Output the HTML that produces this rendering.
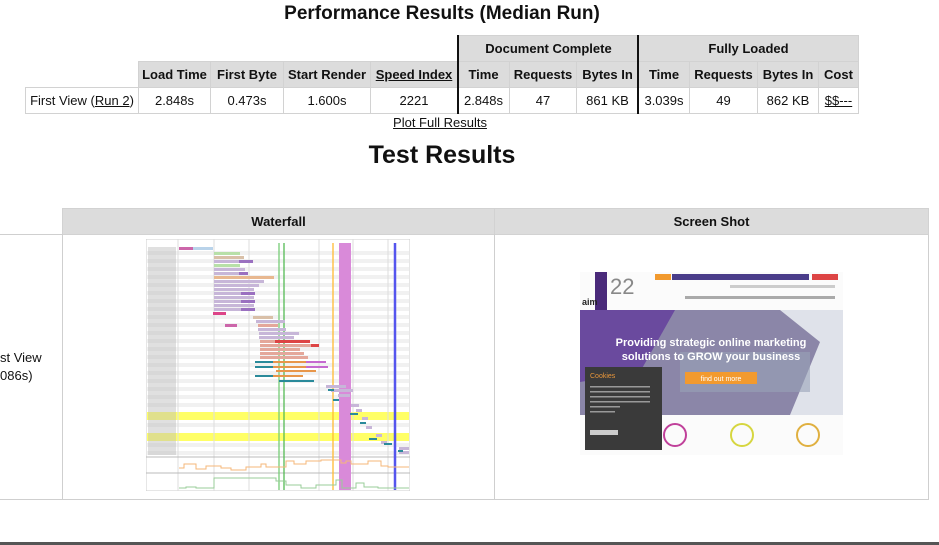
<!DOCTYPE html>
<html><head><meta charset="utf-8"><style>
*{margin:0;padding:0;box-sizing:border-box}
body{width:939px;height:545px;overflow:hidden;background:#fff;font-family:"Liberation Sans",Arial,sans-serif;color:#111;position:relative}
.a{position:absolute}
.c{position:absolute;display:flex;align-items:center;justify-content:center;font-size:13px;border:1px solid #d2d2d2}
.h{background:#dcdcdc;font-weight:bold}
.vb{position:absolute;width:2px;background:#111}
</style></head><body>
<div class="a" style="left:0;width:884px;top:3px;text-align:center;font-weight:bold;font-size:19px">Performance Results (Median Run)</div>

<div class="c h" style="left:458px;top:35px;width:181px;height:27px">Document Complete</div>
<div class="c h" style="left:638px;top:35px;width:221px;height:27px">Fully Loaded</div>

<div class="c h" style="left:138px;top:61px;width:73px;height:27px">Load Time</div>
<div class="c h" style="left:210px;top:61px;width:74px;height:27px">First Byte</div>
<div class="c h" style="left:283px;top:61px;width:88px;height:27px">Start Render</div>
<div class="c h" style="left:370px;top:61px;width:88px;height:27px"><u>Speed Index</u></div>
<div class="c h" style="left:457px;top:61px;width:53px;height:27px">Time</div>
<div class="c h" style="left:509px;top:61px;width:68px;height:27px">Requests</div>
<div class="c h" style="left:576px;top:61px;width:63px;height:27px">Bytes In</div>
<div class="c h" style="left:638px;top:61px;width:52px;height:27px">Time</div>
<div class="c h" style="left:689px;top:61px;width:69px;height:27px">Requests</div>
<div class="c h" style="left:757px;top:61px;width:62px;height:27px">Bytes In</div>
<div class="c h" style="left:818px;top:61px;width:41px;height:27px">Cost</div>

<div class="c" style="left:25px;top:87px;width:114px;height:27px">First View (<u>Run 2</u>)</div>
<div class="c" style="left:138px;top:87px;width:73px;height:27px">2.848s</div>
<div class="c" style="left:210px;top:87px;width:74px;height:27px">0.473s</div>
<div class="c" style="left:283px;top:87px;width:88px;height:27px">1.600s</div>
<div class="c" style="left:370px;top:87px;width:88px;height:27px">2221</div>
<div class="c" style="left:457px;top:87px;width:53px;height:27px">2.848s</div>
<div class="c" style="left:509px;top:87px;width:68px;height:27px">47</div>
<div class="c" style="left:576px;top:87px;width:63px;height:27px">861 KB</div>
<div class="c" style="left:638px;top:87px;width:52px;height:27px">3.039s</div>
<div class="c" style="left:689px;top:87px;width:69px;height:27px">49</div>
<div class="c" style="left:757px;top:87px;width:62px;height:27px">862 KB</div>
<div class="c" style="left:818px;top:87px;width:41px;height:27px"><u>$$---</u></div>
<div class="vb" style="left:457px;top:35px;height:79px"></div>
<div class="vb" style="left:637px;top:35px;height:79px"></div>

<div class="a" style="left:340px;width:200px;top:115px;text-align:center;font-size:13px"><u>Plot Full Results</u></div>
<div class="a" style="left:0;width:884px;top:141px;text-align:center;font-weight:bold;font-size:25px">Test Results</div>

<div class="a" style="left:-2px;top:234px;width:931px;height:266px;border:1px solid #cfcfcf"></div>
<div class="c h" style="left:62px;top:208px;width:433px;height:27px">Waterfall</div>
<div class="c h" style="left:494px;top:208px;width:435px;height:27px">Screen Shot</div>
<div class="a" style="left:62px;top:234px;width:1px;height:266px;background:#cfcfcf"></div>
<div class="a" style="left:494px;top:234px;width:1px;height:266px;background:#cfcfcf"></div>
<div class="a" style="left:0;top:349px;font-size:13px;line-height:18px">st View<br>086s)</div>

<svg class="a" style="left:146px;top:239px" width="264" height="252" viewBox="0 0 264 252">
<rect width="264" height="252" fill="#fff" stroke="#ccc"/>
<g fill="#f1f1f1">
<rect x="1" y="12" width="262" height="4"/><rect x="1" y="20" width="262" height="4"/><rect x="1" y="28" width="262" height="4"/><rect x="1" y="36" width="262" height="4"/><rect x="1" y="44" width="262" height="4"/><rect x="1" y="52" width="262" height="4"/><rect x="1" y="60" width="262" height="4"/><rect x="1" y="68" width="262" height="4"/><rect x="1" y="76" width="262" height="4"/><rect x="1" y="84" width="262" height="4"/><rect x="1" y="92" width="262" height="4"/><rect x="1" y="100" width="262" height="4"/><rect x="1" y="108" width="262" height="4"/><rect x="1" y="116" width="262" height="4"/><rect x="1" y="124" width="262" height="4"/><rect x="1" y="132" width="262" height="4"/><rect x="1" y="140" width="262" height="4"/><rect x="1" y="148" width="262" height="4"/><rect x="1" y="156" width="262" height="4"/><rect x="1" y="164" width="262" height="4"/><rect x="1" y="184" width="262" height="4"/><rect x="1" y="204" width="262" height="4"/><rect x="1" y="212" width="262" height="4"/>
</g>
<rect x="1" y="173" width="262" height="8" fill="#ffff66"/>
<rect x="1" y="194" width="262" height="8" fill="#ffff66"/>
<g fill="#bbb" opacity=".45"><rect x="2" y="8" width="28" height="208"/></g>
<g stroke="#ddd" stroke-width="1"><line x1="32" y1="0" x2="32" y2="252"/><line x1="68" y1="0" x2="68" y2="252"/><line x1="103" y1="0" x2="103" y2="252"/><line x1="173" y1="0" x2="173" y2="252"/><line x1="207" y1="0" x2="207" y2="252"/><line x1="242" y1="0" x2="242" y2="252"/><line x1="0" y1="218" x2="264" y2="218" stroke="#bbb"/><line x1="0" y1="234" x2="264" y2="234" stroke="#bbb"/></g>
<rect x="193" y="4" width="12" height="247" fill="#d98ad9"/>
<g stroke-width="1.3"><line x1="133" y1="4" x2="133" y2="251" stroke="#7c7"/><line x1="138" y1="4" x2="138" y2="251" stroke="#5b5"/><line x1="187" y1="4" x2="187" y2="251" stroke="#fb3"/><line x1="249" y1="4" x2="249" y2="251" stroke="#55e" stroke-width="2.5"/></g>
<g>
<rect x="33" y="8" width="34" height="3" fill="#b9d3ea"/><rect x="33" y="8" width="14" height="3" fill="#c6a"/>
<rect x="68" y="13" width="26" height="3" fill="#b8e0a8"/>
<rect x="68" y="17" width="30" height="3" fill="#d9c0a8"/>
<g fill="#c7b6d8"><rect x="68" y="21" width="38" height="3"/><rect x="68" y="29" width="31" height="3"/><rect x="68" y="33" width="33" height="3"/><rect x="68" y="41" width="50" height="3"/><rect x="68" y="45" width="45" height="3"/><rect x="68" y="49" width="40" height="3"/><rect x="68" y="53" width="41" height="3"/><rect x="68" y="57" width="40" height="3"/><rect x="68" y="61" width="40" height="3"/><rect x="68" y="65" width="40" height="3"/><rect x="68" y="69" width="40" height="3"/></g>
<g fill="#9a70c0"><rect x="93" y="21" width="14" height="3"/><rect x="93" y="33" width="9" height="3"/><rect x="95" y="53" width="14" height="3"/><rect x="95" y="61" width="14" height="3"/><rect x="95" y="69" width="14" height="3"/></g>
<rect x="68" y="25" width="26" height="3" fill="#b8e0a8"/>
<rect x="68" y="37" width="60" height="3" fill="#e8b890"/>
<rect x="67" y="73" width="13" height="3" fill="#d48"/>
<rect x="107" y="77" width="20" height="3" fill="#d9c0a8"/>
<rect x="110" y="81" width="29" height="3" fill="#c7b6d8"/>
<rect x="79" y="85" width="12" height="3" fill="#c6a"/>
<rect x="112" y="85" width="20" height="3" fill="#e4a79a"/>
<g fill="#c7b6d8"><rect x="112" y="89" width="28" height="3"/><rect x="113" y="93" width="40" height="3"/><rect x="113" y="97" width="35" height="3"/></g>
<g fill="#e4a79a"><rect x="114" y="101" width="50" height="3"/><rect x="114" y="105" width="58" height="3"/><rect x="114" y="109" width="40" height="3"/><rect x="114" y="113" width="44" height="3"/><rect x="114" y="117" width="48" height="3"/></g>
<rect x="129" y="101" width="35" height="3" fill="#d44"/><rect x="165" y="105" width="8" height="3" fill="#d44"/>
<g fill="#2a8a9a"><rect x="109" y="122" width="18" height="2"/><rect x="109" y="127" width="18" height="2"/><rect x="109" y="136" width="18" height="2"/><rect x="133" y="141" width="35" height="2"/></g>
<g fill="#e8964a"><rect x="127" y="122" width="48" height="2"/><rect x="127" y="127" width="40" height="2"/><rect x="130" y="131" width="40" height="2"/><rect x="127" y="136" width="30" height="2"/></g>
<g fill="#c56ad0"><rect x="160" y="122" width="20" height="2"/><rect x="160" y="127" width="22" height="2"/></g>
<g fill="#c7b6d8"><rect x="180" y="146" width="20" height="3"/><rect x="185" y="150" width="22" height="3"/><rect x="192" y="155" width="12" height="3"/><rect x="205" y="165" width="8" height="3"/><rect x="210" y="170" width="6" height="3"/><rect x="216" y="178" width="6" height="3"/><rect x="220" y="187" width="6" height="3"/><rect x="230" y="195" width="6" height="3"/><rect x="235" y="202" width="6" height="3"/><rect x="253" y="208" width="10" height="3"/><rect x="253" y="212" width="10" height="3"/></g>
<g fill="#2a8a9a"><rect x="182" y="150" width="6" height="2"/><rect x="187" y="160" width="6" height="2"/><rect x="204" y="174" width="8" height="2"/><rect x="214" y="183" width="6" height="2"/><rect x="223" y="199" width="8" height="2"/><rect x="238" y="204" width="8" height="2"/><rect x="252" y="211" width="5" height="2"/></g>
</g>
<polyline fill="none" stroke="#f5b77a" stroke-width="1" points="33,229 38,229 38,225 50,225 50,230 60,230 60,227 75,227 75,229 85,229 85,231 100,231 100,228 115,228 115,225 120,225 120,228 140,228 140,222 148,222 148,225 160,225 160,222 175,222 175,221 195,221 195,224 200,224 200,222 205,222 205,225 222,225 222,222 235,222 235,227 242,227 242,228 263,228"/>
<polyline fill="none" stroke="#9c9" stroke-width="1" points="33,249 40,249 40,248 50,248 50,249 68,249 68,239 130,239 130,242 140,242 140,246 155,246 155,249 170,249 170,246 190,246 190,241 196,241 196,249 210,249 210,244 218,244 218,248 232,248 232,249 263,249"/>
</svg>

<svg class="a" style="left:580px;top:272px" width="263" height="183" viewBox="0 0 263 183">
<rect width="263" height="183" fill="#fbfbfb"/>
<rect x="15" y="0" width="12" height="38" fill="#4a2a7a"/>
<text x="2" y="33" font-size="9" font-weight="bold" font-family="Liberation Sans" fill="#222">aim</text>
<text x="30" y="22" font-size="22" font-family="Liberation Sans" fill="#888">22</text>
<rect x="75" y="2" width="16" height="6" fill="#f29a2e"/>
<rect x="92" y="2" width="137" height="6" fill="#4a3d8a"/>
<rect x="232" y="2" width="26" height="6" fill="#d44"/>
<rect x="150" y="13" width="105" height="3" fill="#ccc"/>
<rect x="105" y="24" width="150" height="3" fill="#aaa"/>
<rect x="0" y="38" width="263" height="105" fill="#8b86a8"/>
<polygon points="0,38 95,38 60,100 0,110" fill="#6a4a9e"/>
<polygon points="200,38 263,38 263,143 210,143 240,70" fill="#dfe2ea"/>
<rect x="100" y="80" width="130" height="40" fill="#9aa4b8" opacity=".6"/>
<text x="131" y="74" font-size="11" font-weight="bold" text-anchor="middle" font-family="Liberation Sans" fill="#fff">Providing strategic online marketing</text>
<text x="131" y="88" font-size="11" font-weight="bold" text-anchor="middle" font-family="Liberation Sans" fill="#fff">solutions to GROW your business</text>
<rect x="105" y="100" width="72" height="12" fill="#f29a2e"/>
<text x="141" y="109" font-size="7" text-anchor="middle" font-family="Liberation Sans" fill="#fff">find out more</text>
<circle cx="95" cy="163" r="11" fill="none" stroke="#c0409a" stroke-width="2"/>
<circle cx="162" cy="163" r="11" fill="none" stroke="#d6d640" stroke-width="2"/>
<circle cx="228" cy="163" r="11" fill="none" stroke="#e0b040" stroke-width="2"/>
<rect x="5" y="95" width="77" height="83" fill="#3a3a3a"/>
<text x="10" y="106" font-size="7" font-family="Liberation Sans" fill="#e8963a">Cookies</text>
<g fill="#999"><rect x="10" y="114" width="60" height="1.5"/><rect x="10" y="119" width="60" height="1.5"/><rect x="10" y="124" width="60" height="1.5"/><rect x="10" y="129" width="60" height="1.5"/><rect x="10" y="134" width="30" height="1.5"/><rect x="10" y="139" width="25" height="1.5"/></g>
<rect x="10" y="158" width="28" height="5" fill="#ccc"/>
</svg>

<div class="a" style="left:0;top:542px;width:939px;height:3px;background:#555"></div>
</body></html>
